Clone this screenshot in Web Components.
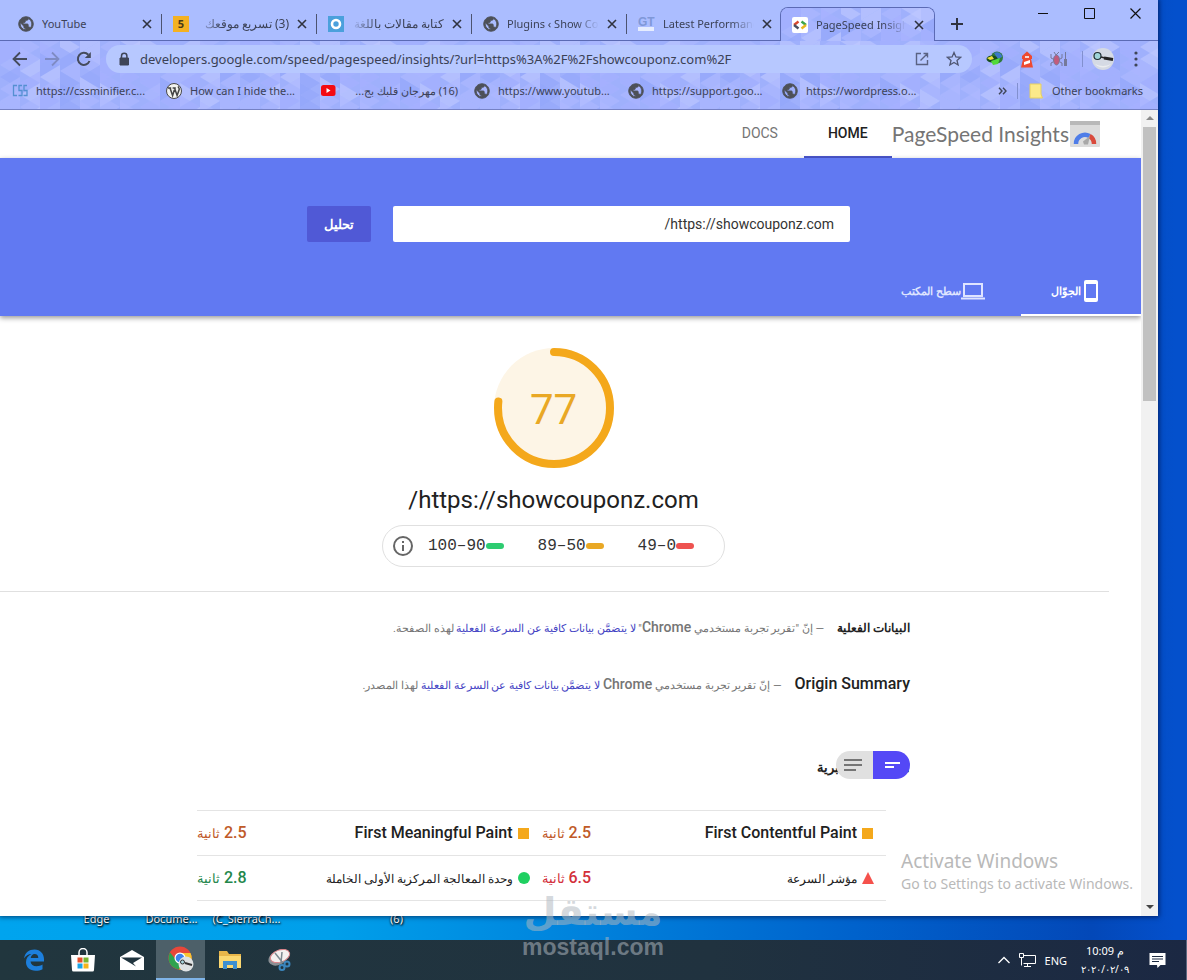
<!DOCTYPE html>
<html lang="ar">
<head>
<meta charset="utf-8">
<title>PageSpeed Insights</title>
<style>
html,body{margin:0;height:100%}
body{overflow:hidden;font-family:"Noto Sans","Open Sans",sans-serif;font-size:11px;color:#3c4257}
</style>
</head>
<body>
<desk-top></desk-top>
<script>
const ui = (name, css, html, setup) => customElements.define(name, class extends HTMLElement {
  connectedCallback() {
    if (this.shadowRoot) return;
    const t = document.createElement('template');
    const body = typeof html === 'function' ? html(this) : html;
    t.innerHTML = `<style>*{box-sizing:border-box}:host{box-sizing:border-box}button{font:inherit;color:inherit;border:0;background:none;padding:0;margin:0}a{color:inherit;text-decoration:none}svg{display:block;flex:none}${css}</style>${body}`;
    this.attachShadow({mode: 'open'}).append(t.content.cloneNode(true));
    if (setup) setup(this);
  }
});

const icons = {
  globe: `<svg width="16" height="16" viewBox="1 1 22 22"><path fill="#4d5058" d="M12 2C6.480 2 2 6.480 2 12s4.480 10 10 10 10-4.480 10-10S17.520 2 12 2zm-1 17.930c-3.950-.49-7-3.850-7-7.930 0-.62.080-1.210.210-1.790L9 15v1c0 1.100.9 2 2 2v1.930zm6.900-2.540c-.26-.81-1-1.390-1.900-1.390h-1v-3c0-.55-.45-1-1-1H8v-2h2c.55 0 1-.45 1-1V7h2c1.100 0 2-.9 2-2v-.41c2.930 1.190 5 4.060 5 7.410 0 2.080-.8 3.970-2.100 5.390z" stroke="#4d5058" stroke-width="1.200"/></svg>`,
  five: `<svg width="16" height="16"><rect width="16" height="16" fill="#f4b122"/><text x="8" y="12" text-anchor="middle" font-family="Open Sans" font-weight="700" font-size="11" fill="#4a3a16">5</text></svg>`,
  ring: `<svg width="16" height="16"><rect width="16" height="16" fill="#4aa0dc"/><circle cx="8" cy="8" r="4" fill="none" stroke="#fff" stroke-width="2.6"/></svg>`,
  gt: `<svg width="17" height="16"><text x="0" y="10" font-family="Liberation Sans" font-weight="700" font-size="12" fill="#7f98d8">GT</text><path d="M0 11h16v4H0z" fill="#e6edff"/></svg>`,
  psi: `<svg width="16" height="16"><rect width="16" height="16" rx="2" fill="#fff"/><path d="M6.5 4.5L2 8" stroke="#d9482f" stroke-width="2.4"/><path d="M2 8l4.500 3.500" stroke="#4a4f60" stroke-width="2.400"/><path d="M9.500 4.500L14 8" stroke="#3ba54b" stroke-width="2.400"/><path d="M14 8l-4.500 3.500" stroke="#e9b51e" stroke-width="2.400"/></svg>`,
  css: `<svg width="16" height="16" fill="none" stroke="#5590d2" stroke-width="1.300"><path d="M5 2.500H1.500v10H5M10 2.500H7V7.500h3v5H6.500M15 2.500h-3V7.500h3v5h-3.500"/></svg>`,
  wp: `<svg width="16" height="16" viewBox="0 0 16 16"><circle cx="8" cy="8" r="7.500" fill="#f3f3f0" stroke="#474747"/><path d="M2 5h3.200M4 5l2.600 7.500L8.300 7M6.600 5h3.200M8.500 5l2.600 7.500L13.200 6.500c.2-1.400-.6-2-1.200-3" fill="none" stroke="#444" stroke-width="1.500"/></svg>`,
  yt: `<svg width="16" height="16"><rect x="1" y="2" width="14.500" height="11" rx="2.500" fill="#f40b12"/><path d="M6.500 5v5l4-2.500z" fill="#fff"/></svg>`
};
const X = `<svg width="10" height="10" stroke="#2f3340" stroke-width="1.600"><path d="M1 1l8 8M9 1l-8 8"/></svg>`;

/* faceted triangle texture of the browser theme */
ui('theme-texture', `:host{display:block;position:absolute;inset:0;z-index:-1;overflow:hidden;border-radius:inherit;background:#9fb0fc}`,
  () => {
    let p = '', s = 7;
    const rnd = () => (s = s * 16807 % 2147483647) / 2147483647;
    for (let x = 0; x < 240; x += 20) for (let y = -12; y < 84; y += 12) {
      const k = rnd(), l = rnd() > .5, yy = y + (x / 20 % 2) * 6;
      const c = k > .84 ? '#c0caff' : k > .55 ? '#adb9ff' : k > .3 ? '#93a6fa' : '#a5b0ff';
      p += `<path d="${l ? `M${x} ${yy + 12}l20-12v24z` : `M${x} ${yy}v24l20-12z`}" fill="${c}" opacity=".6"/>`;
    }
    return `<svg width="100%" height="100%"><defs><pattern id="t" width="240" height="72" patternUnits="userSpaceOnUse">${p}</pattern></defs><rect width="100%" height="100%" fill="url(#t)"/></svg>`;
  });

ui('browser-tab', `
:host{display:flex;align-items:center;gap:8px;flex:0 1 155px;min-width:0;height:32px;padding:0 9px 0 12px;margin-top:8px;position:relative}
:host::after{content:"";position:absolute;right:-1px;top:6px;height:20px;width:1px;background:#4c5370}
:host([last])::after,:host([active])::after{display:none}
:host([active]){margin:7px 0 -1px -1px;height:34px;border:1px solid #5b6ab4;border-bottom:0;border-radius:8px 8px 0 0;z-index:1;padding:0 10px 0 11px}
:host([active]) theme-texture{border-radius:7px 7px 0 0}
span{flex:1;min-width:0;overflow:hidden;white-space:nowrap;line-height:18px}
:host([fade]) span{-webkit-mask:linear-gradient(90deg,#000 75%,transparent)}
:host([rtl]) span{direction:rtl;font-size:12px;-webkit-mask:linear-gradient(270deg,#000 72%,transparent 102%)}`,
  e => `${e.hasAttribute('active') ? '<theme-texture></theme-texture>' : ''}${icons[e.getAttribute('icon')]}<span><slot></slot></span><button aria-label="Close tab">${X}</button>`);

ui('book-mark', `:host{display:block;flex:0 1 154px;min-width:0}a{display:flex;gap:8px;align-items:center}
span{white-space:nowrap;line-height:18px}:host([rtl]) span{direction:rtl;width:110px;margin-left:4px;text-align:right}`,
  e => `<a href="#">${icons[e.getAttribute('icon')]}<span><slot></slot></span></a>`);

ui('tab-strip', `
:host{display:flex;height:40px;padding-left:6px;background:#abbdff}
.new{width:44px;display:grid;place-items:center;margin-top:8px}
.win{margin-left:auto;display:flex;height:27px}
.win button{width:46px;display:grid;place-items:center}`,
`<browser-tab icon="globe">YouTube</browser-tab>
<browser-tab icon="five" rtl>(3) تسريع موقعك</browser-tab>
<browser-tab icon="ring" rtl>كتابة مقالات باللغة</browser-tab>
<browser-tab icon="globe" fade>Plugins ‹ Show Couponz</browser-tab>
<browser-tab icon="gt" fade last>Latest Performance</browser-tab>
<browser-tab icon="psi" fade active>PageSpeed Insights</browser-tab>
<button class="new" aria-label="New tab"><svg width="12" height="12" stroke="#2f3340" stroke-width="2"><path d="M6 0v12M0 6h12"/></svg></button>
<div class="win">
<button aria-label="Minimize"><svg width="10" height="11" stroke="#111"><path d="M0 5.500h10"/></svg></button>
<button aria-label="Maximize"><svg width="11" height="11" fill="none" stroke="#111"><path d="M.5.500h10v10h-10z"/></svg></button>
<button aria-label="Close"><svg width="11" height="11" stroke="#111" stroke-width="1.200"><path d="M.5.500l10 10M10.500.500l-10 10"/></svg></button>
</div>`);

ui('tool-bar', `
:host{display:flex;height:36px;align-items:center;padding:0 6px 0 8px}
button{display:grid;place-items:center;width:32px;height:28px;flex:none}
.nav{width:24px;margin-right:8px}
form{flex:1;min-width:0;margin:0 7px 0 2px;height:28px;border-radius:14px;background:#b7c8ff;display:flex;align-items:center;padding:0 2px 0 12px}
input{flex:1;min-width:0;border:0;background:none;font:13px/20px "Noto Sans",sans-serif;color:#3a4155;padding:0;margin-left:10px;outline:0}
i{width:1px;height:16px;background:#8290cf;margin:0 8px 0 7px}
.av{width:24px}.dots{margin-left:5px}`,
`<button class="nav" aria-label="Back"><svg width="16" height="16" fill="none" stroke="#454b5c" stroke-width="1.800"><path d="M15 8H2M8 1.500L1.500 8 8 14.500"/></svg></button>
<button class="nav" aria-label="Forward"><svg width="16" height="16" fill="none" stroke="#7f8bc4" stroke-width="1.800"><path d="M1 8h13M8 1.500L14.500 8 8 14.500"/></svg></button>
<button class="nav" aria-label="Reload"><svg width="16" height="16" fill="none" stroke="#454b5c" stroke-width="2"><path d="M13.500 10A6 6 0 1 1 12.300 3.800"/><path d="M14.800 1v6h-6z" fill="#454b5c" stroke="none"/></svg></button>
<form><svg width="12" height="14"><path d="M2 6h8.500v7H2z" fill="#3f4557" stroke="#3f4557"/><path d="M3.500 6V4a2.700 2.700 0 0 1 5.400 0v2" fill="none" stroke="#3f4557" stroke-width="1.500"/></svg>
<input aria-label="Address" value="developers.google.com/speed/pagespeed/insights/?url=https%3A%2F%2Fshowcouponz.com%2F">
<button type="button" aria-label="Open"><svg width="14" height="14" fill="none" stroke="#5a6283" stroke-width="1.400"><path d="M6 1.500H1.500v11h11V8M8.500 1.500h4v4M12.500 1.500L5.500 8.500"/></svg></button>
<button type="button" aria-label="Bookmark"><svg width="16" height="16" fill="none" stroke="#4f5672" stroke-width="1.300"><path d="M8 1.500l1.900 4.400 4.700.4-3.600 3.100 1.100 4.600L8 11.500 3.900 14 5 9.400 1.400 6.300l4.700-.4z"/></svg></button></form>
<button aria-label="Download manager"><svg width="18" height="16"><circle cx="11" cy="6.500" r="6" fill="#2f7a3c"/><path d="M8 2c3-2 8 0 8 4l-4 2z" fill="#3b78c9"/><ellipse cx="6" cy="8" rx="5.500" ry="3.500" fill="#174d1c"/><path d="M1 7l5-2 2 3-4 1z" fill="#f0df3c"/><path d="M5 10l9-3-2 6-5 1z" fill="#52d93a"/></svg></button>
<button aria-label="Lighthouse"><svg width="14" height="17"><path d="M2 5L7 .5 12 5v3H11l2 8.500H1L3 8H2z" fill="#ee4a31"/><path d="M5 5h4v2H5z" fill="#f6d9d6"/><path d="M4 11l6-2v3l-6 2z" fill="#fff"/></svg></button>
<button aria-label="Debugger"><svg width="18" height="16" fill="none" stroke="#75799a"><ellipse cx="6.500" cy="9" rx="3" ry="5" fill="#c25b7c"/><path d="M1 3v4l2 1M12 3v4l-2 1M1 15v-3l2-1M12 15v-3l-2-1M4 1l2 3 3-3"/><path d="M15.500 1v7" /><path d="M15.500 8v7" stroke-width="3"/></svg></button>
<i></i>
<button class="av" aria-label="Profile"><svg width="24" height="24"><circle cx="12" cy="12" r="11" fill="#d5dae4"/><path d="M4 17q8 4 16 0a11 11 0 0 1-16 0" fill="#eceef0"/><circle cx="6.500" cy="9" r="3.500" fill="#9fd5d8" stroke="#1f2d33" stroke-width="1.200"/><path d="M10 10l4 1" stroke="#242424" stroke-width="1.500"/><path d="M13 11l9 1.500" stroke="#242424" stroke-width="3"/></svg></button>
<button class="dots" aria-label="Menu"><svg width="4" height="16" fill="#3f4557"><circle cx="2" cy="2" r="1.600"/><circle cx="2" cy="8" r="1.600"/><circle cx="2" cy="14" r="1.600"/></svg></button>`);

ui('bookmark-bar', `
:host{display:flex;height:32px;align-items:center;padding:0 15px 4px 12px}
button{margin-left:auto;margin-right:10px}i{width:1px;height:16px;background:#8290cf;margin-right:11px}
a{display:flex;gap:9px;align-items:center;white-space:nowrap;line-height:18px}`,
`<book-mark icon="css">https://cssminifier.c...</book-mark>
<book-mark icon="wp">How can I hide the...</book-mark>
<book-mark icon="yt" rtl>(16) مهرجان قلبك بج...</book-mark>
<book-mark icon="globe">https://www.youtub...</book-mark>
<book-mark icon="globe">https://support.goo...</book-mark>
<book-mark icon="globe">https://wordpress.o...</book-mark>
<button aria-label="More bookmarks"><svg width="9" height="8" fill="none" stroke="#3f4557" stroke-width="1.400"><path d="M1 .8L4 4 1 7.200M5 .8L8 4 5 7.200"/></svg></button><i></i>
<a href="#"><svg width="14" height="16"><path d="M1 1h11v10l1.500 4H1z" fill="#fbe98a" stroke="#e6cf62"/></svg>Other bookmarks</a>`);

ui('psi-nav', `
:host{display:flex;height:48px;align-items:center;padding-inline-start:41px;color:#757575;background:#fff}
.logo{display:flex;align-items:center;gap:1px;font:21px/28px Lato,sans-serif;color:#757575}
a.t{height:48px;line-height:46px;width:88px;text-align:center;font-family:Roboto,sans-serif;font-size:14px}
a.on{color:#212121;font-weight:500;border-bottom:2px solid #4a56cc}`,
`<a class="logo" href="#"><svg width="30" height="26"><rect width="30" height="26" rx="1" fill="#dcdcdc"/><path d="M0 0h30v4H0z" fill="#b9b9b9"/><path d="M6 23a9 9 0 0 1 13.500-8" fill="none" stroke="#4f7de8" stroke-width="4.500"/><path d="M19.500 15a9 9 0 0 1 4.500 8" fill="none" stroke="#d94a3c" stroke-width="4.500"/><path d="M20 15l-2 8.500h-4l-1-3z" fill="#a8a8a8"/></svg><span>PageSpeed Insights</span></a>
<a class="t on" href="#">HOME</a><a class="t" href="#">DOCS</a>`);

ui('psi-hero', `
:host{display:flex;flex-direction:column;height:158px;background:#6179f2;box-shadow:0 2px 5px rgba(0,0,0,.4);position:relative;color:#fff;font-family:Roboto,sans-serif}
form{display:flex;gap:22px;padding:48px 291px 0 307px;margin:0}
input{flex:1;min-width:0;height:36px;border:0;border-radius:2px;background:#fff;padding:0 16px 1px;font:14px Roboto,sans-serif;color:#333;direction:rtl;outline:0}
form button{width:64px;height:36px;border-radius:2px;background:#5059d6;font-weight:700;font-size:13px}
nav{display:flex;margin-top:auto}
nav button{height:48px;width:120px;display:flex;align-items:center;padding-inline-start:36px;font-weight:700;font-size:11px;white-space:nowrap;border-bottom:2px solid transparent;color:#dfe4ff}
nav button.on{border-color:#fff;color:#fff}`,
`<form><input aria-label="URL" value="https://showcouponz.com/"><button type="button">تحليل</button></form>
<nav><button class="on"><svg width="24" height="24"><path d="M5 1h10a2 2 0 0 1 2 2v18a2 2 0 0 1-2 2H5a2 2 0 0 1-2-2V3a2 2 0 0 1 2-2zm0 4v14h10V5z" fill="#fff" fill-rule="evenodd"/></svg>الجوّال</button>
<button><svg width="24" height="24" fill="none" stroke="#dfe4ff" stroke-width="2"><path d="M3 5h18v12H3zM0 19.500h24"/></svg>سطح المكتب</button></nav>`);

ui('score-gauge', `
:host{display:grid;width:120px;height:120px;place-items:center;font:42px/48px Roboto,sans-serif;color:#e9a825}
svg,span{grid-area:1/1}span{padding-top:4px}`,
`<svg width="120" height="120"><circle cx="60" cy="60" r="60" fill="#fdf5e6"/><circle cx="60" cy="60" r="56" fill="none" stroke="#f4a81b" stroke-width="8" stroke-linecap="round" stroke-dasharray="270 400" transform="rotate(-90 60 60)"/></svg><span><slot></slot></span>`);

ui('score-scale', `
:host{display:flex;align-items:center;width:343px;height:42px;border:1px solid #e0e0e0;border-radius:21px;padding:0 30px 0 9px;gap:34px;font:16px/20px "Liberation Mono",monospace;color:#333}
span{display:flex;align-items:center;direction:ltr;white-space:nowrap}
b{width:18px;height:6px;border-radius:3px;background:var(--c)}
svg{margin-inline-start:-20px}`,
`<span style="--c:#ee5350">49–0<b></b></span><span style="--c:#e9a825">89–50<b></b></span><span style="--c:#2ecc71">100–90<b></b></span>
<svg width="22" height="22" fill="none" stroke="#666" stroke-width="2"><circle cx="11" cy="11" r="9"/><path d="M11 10v6M11 6v2"/></svg>`);

ui('summary-line', `
:host{display:block;height:20px;line-height:20px;font-family:Roboto,sans-serif;font-size:11px;color:#757575;white-space:nowrap}
h2{display:inline;margin:0;margin-inline-end:13px;font-size:var(--h,16px);font-weight:var(--w,500);color:#212121}`,
`<h2><slot name="title"></slot></h2><slot></slot>`);

ui('view-toggle', `
:host{display:flex;width:74px;height:28px;border-radius:14px;overflow:hidden;position:absolute;top:0;right:0}
button{flex:1;display:grid;place-items:center;background:#e0e0e0}.on{background:#5448f6}`,
`<button class="on" aria-label="Compact"><svg width="18" height="14" fill="none" stroke="#fff" stroke-width="2"><path d="M2 5h15M2 9h9"/></svg></button>
<button aria-label="Detailed"><svg width="22" height="14" fill="none" stroke="#757575" stroke-width="2"><path d="M0 2h18M0 7h18M0 12h12"/></svg></button>`);

ui('metric-table', `
:host{display:block;margin-inline-start:24px}
table{width:100%;border-collapse:collapse;table-layout:fixed;font:500 16px/20px Roboto,sans-serif}
tr{border-top:1px solid #e4e4e4;height:45px}
th{text-align:right;font-weight:500;color:#212121;padding:0}
th div{display:flex;align-items:center;gap:5px;padding-inline-start:12px}
small{font-size:12px;font-weight:400}td small{font-size:13px}
td{padding:0;text-align:left;width:61px;white-space:nowrap}
.o{color:#c05a28}.r{color:#d32f3a}.g{color:#23874b}`,
  () => {
    const sq = `<svg width="12" height="12"><path d="M0 1h11v11H0z" fill="#f4a81b"/></svg>`,
      tri = `<svg width="12" height="12"><path d="M6 0l6 12H0z" fill="#f5514c"/></svg>`,
      dot = `<svg width="12" height="12"><circle cx="6" cy="6" r="6" fill="#1fd061"/></svg>`,
      m = (i, n, v, c) => `<th scope="row"><div>${i}<span>${n}</span></div></th><td class="${c}">${v} <small>ثانية</small></td>`;
    return `<table><tbody><tr>${m(sq, 'First Contentful Paint', '2.5', 'o')}${m(sq, 'First Meaningful Paint', '2.5', 'o')}</tr>
<tr>${m(tri, '<small>مؤشر السرعة</small>', '6.5', 'r')}${m(dot, '<small>وحدة المعالجة المركزية الأولى الخاملة</small>', '2.8', 'g')}</tr><tr><td colspan="4"></td></tr></tbody></table>`;
  });

ui('psi-report', `
:host{display:block;margin-inline-start:32px}
.top{display:flex;flex-direction:column;align-items:center;padding:32px 2px 24px 0;border-bottom:1px solid #e0e0e0}
h1{font:24px/28px Roboto,sans-serif;color:#212121;margin:18px 0 11px}
.body{padding-inline:199px 197px}
summary-line{margin-top:37px}summary-line:first-child{margin-top:25px}
em{font:500 14px/20px Roboto,sans-serif}a{color:#4545c4}
.lab{position:relative;height:28px;margin:57px 0 31px}
h3{margin:0;font:700 13px/34px Roboto,sans-serif;color:#212121}`,
`<div class="top"><score-gauge>77</score-gauge><h1>https://showcouponz.com/</h1><score-scale></score-scale></div>
<div class="body">
<summary-line style="--h:12px;--w:700"><span slot="title">البيانات الفعلية</span>— إنّ "تقرير تجربة مستخدمي <em>Chrome</em>" <a href="#">لا يتضمَّن بيانات كافية عن السرعة الفعلية</a> لهذه الصفحة.</summary-line>
<summary-line><span slot="title">Origin Summary</span>— إنّ تقرير تجربة مستخدمي <em>Chrome</em> <a href="#">لا يتضمَّن بيانات كافية عن السرعة الفعلية</a> لهذا المصدر.</summary-line>
<div class="lab"><h3>البيانات المختبرية</h3><view-toggle></view-toggle></div>
<metric-table></metric-table></div>`);

ui('scroll-bar', `
:host{display:flex;flex-direction:column;align-items:center;width:17px;flex:none;background:#f1f1f1}
svg{margin:5px 0 7px}i{width:13px;height:274px;background:#c1c1c1}svg:last-child{margin:auto 0 6px}`,
`<svg width="8" height="5"><path d="M0 5l4-4 4 4z" fill="#8a8a8a"/></svg><i></i><svg width="8" height="5"><path d="M0 0l4 4 4-4z" fill="#444"/></svg>`);

ui('browser-window', `
:host{display:flex;flex-direction:column;flex:1;min-height:0;margin-right:29px;background:#fff;box-shadow:0 0 5px 1px rgba(0,0,40,.6);position:relative;z-index:1}
header{position:relative;isolation:isolate}
.bars{position:relative;isolation:isolate;border-top:1px solid #5b6ab4;border-bottom:1px solid #7581c4}
main{flex:1;min-height:0;display:flex}
.page{flex:1;min-width:0;overflow:hidden;direction:rtl}
tab-strip{position:relative;z-index:1}`,
`<header><tab-strip></tab-strip><div class="bars"><theme-texture></theme-texture><tool-bar></tool-bar><bookmark-bar></bookmark-bar></div></header>
<main><div class="page"><psi-nav></psi-nav><psi-hero></psi-hero><psi-report></psi-report></div><scroll-bar></scroll-bar></main>`);

ui('desktop-labels', `
:host{display:grid;grid-template-columns:repeat(5,75px);padding-left:59px;height:29px;margin-top:-5px;color:#fff;font-size:11px;line-height:16px;text-align:center;text-shadow:1px 1px 2px #000,0 1px 2px #000;white-space:nowrap}`,
`<span>Edge</span><span>Docume...</span><span>(C_SierraCh...</span><span></span><span>(6)</span>`);

ui('activation-notice', `
:host{display:block;position:absolute;z-index:2;left:901px;bottom:86px;color:#b9b9b9;white-space:nowrap;font-size:14px;line-height:20px}
b{display:block;font-weight:400;font-size:19px;line-height:26px}`,
`<b>Activate Windows</b>Go to Settings to activate Windows.`);

ui('mostaql-mark', `
:host{display:flex;flex-direction:column;align-items:center;position:absolute;z-index:3;left:521px;bottom:20px;width:144px;color:rgba(176,184,192,.55);white-space:nowrap}
b{font:700 38px/44px "DejaVu Sans",sans-serif;direction:rtl}span{font:700 23px/26px "Liberation Sans",sans-serif}`,
`<b>مستقل</b><span>mostaql.com</span>`);

ui('task-bar', `
:host{display:flex;height:40px;flex:none;align-items:center;padding-left:9px;color:#fff;background:linear-gradient(90deg,#21363e,#20323f 60%,#1b2843)}
button{width:49px;height:40px;display:grid;place-items:center}
.on{background:#4d6069;border-bottom:2px solid #7fb4e8}
.tray{display:flex;align-items:center;margin-left:auto;height:40px}
.clock{text-align:center;line-height:18px;width:52px;margin:0 18px 0 12px}
.clock div{white-space:nowrap}.clock div+div{font-size:10px;direction:rtl}
.tray svg{margin-right:9px}i{width:1px;height:40px;background:#5c6880}`,
`<button aria-label="Edge"><svg width="22" height="22" viewBox="0 0 22 22"><path d="M1 9.500C2 3.500 6 .5 11.500.5 17.500.5 21 5 21 10v2.500H7.500c.3 3 2.700 4.700 6 4.700 2.400 0 4.500-.7 6-1.600v4.600c-2 1-4.300 1.500-6.800 1.500C6.500 21.700 3 18 3 13.200 3 9.500 5 6.500 8.500 5 5.500 5 2.500 6.800 1 9.500zM7.700 9h7.600c0-2.400-1.400-4-3.700-4C9.500 5 8 6.700 7.700 9z" fill="#1d7fdc"/></svg></button>
<button aria-label="Store"><svg width="24" height="24"><path d="M8 8V4.500a4 4 0 0 1 8 0V8" fill="none" stroke="#fff" stroke-width="1.500"/><path d="M0 7h24l-1 15a1.500 1.500 0 0 1-1.500 1.500h-19A1.500 1.500 0 0 1 1 22z" fill="#fff"/><path d="M6.500 9.500h5v5h-5z" fill="#e5502c"/><path d="M12.500 9.500h5v5h-5z" fill="#79b530"/><path d="M6.500 15.500h5v5h-5z" fill="#1ba4e6"/><path d="M12.500 15.500h5v5h-5z" fill="#f6b41b"/></svg></button>
<button aria-label="Mail"><svg width="24" height="20"><path d="M0 7L12 0l12 7v13H0z" fill="#fff"/><path d="M1 7.500l21 0-9 5.500 3 3.500-5-3z" fill="#20343e"/></svg></button>
<button class="on" aria-label="Chrome"><svg width="26" height="26" viewBox="0 0 26 26"><circle cx="12" cy="12" r="11.500" fill="#e7473a"/><path d="M2 6.500A11.500 11.500 0 0 0 11 23.500l4.500-9L9 15z" fill="#2ea24f"/><path d="M12 7h10.500A11.500 11.500 0 0 1 11 23.500l5-9z" fill="#f8c531"/><circle cx="12" cy="12" r="5.500" fill="#fff"/><circle cx="12" cy="12" r="4.300" fill="#3f83ee"/><circle cx="18" cy="18" r="7.500" fill="#dfe3e4"/><circle cx="14.500" cy="16" r="2" fill="#a8d6dd" stroke="#333"/><path d="M17 17l7 2" stroke="#333" stroke-width="2"/></svg></button>
<button aria-label="Explorer"><svg width="22" height="20"><path d="M0 1h8l2 3h12v14H0z" fill="#e8b64a"/><path d="M0 6h22v12H0z" fill="#fbd871"/><path d="M4 11h14v8h-4v-4H8v4H4z" fill="#3d8fd0"/></svg></button>
<button aria-label="Snipping tool"><svg width="24" height="22"><ellipse cx="11" cy="9" rx="10" ry="7" fill="#8a8f94" transform="rotate(-25 11 9)"/><ellipse cx="13" cy="7" rx="10" ry="6" fill="#f4f0f0" stroke="#d9848a" transform="rotate(-20 13 7)"/><path d="M8 4l8 10M15 3l-1 11" stroke="#7d8890" stroke-width="1.500"/><circle cx="20" cy="15" r="2.500" fill="none" stroke="#3b86be" stroke-width="2"/><circle cx="15" cy="18.500" r="2.500" fill="none" stroke="#3b86be" stroke-width="2"/></svg></button>
<div class="tray"><svg width="12" height="8" fill="none" stroke="#fff" stroke-width="1.300"><path d="M.5 7L6 1.500 11.500 7"/></svg>
<svg width="17" height="15" fill="none" stroke="#fff"><path d="M4.500 2.500h12v8h-12M.5.500h4v4h-4zM2.500 4.500v8M5 13.500h7M8.500 10.500v3"/></svg><span>ENG</span>
<div class="clock"><div>10:09 م</div><div>٠٩‏/٠٢‏/٢٠٢٠</div></div>
<svg width="17" height="17" style="margin-right:20px"><path d="M.5 1h16v12h-5L8.500 16 8 13H.5z" fill="#fff"/><path d="M3 4.500h11M3 7h11M3 9.500h7" stroke="#1c2b42"/></svg><i></i></div>`);

ui('desk-top', `
:host{display:flex;flex-direction:column;height:100vh;position:relative;overflow:hidden;background:linear-gradient(90deg,#00a4ee,#009fea 28%,#0088df 45%,#0062cc 72%,#0348b8 92%,#0450cc 99%)}`,
`<browser-window></browser-window><desktop-labels></desktop-labels><task-bar></task-bar><activation-notice></activation-notice><mostaql-mark></mostaql-mark>`);
</script>
</body>
</html>
